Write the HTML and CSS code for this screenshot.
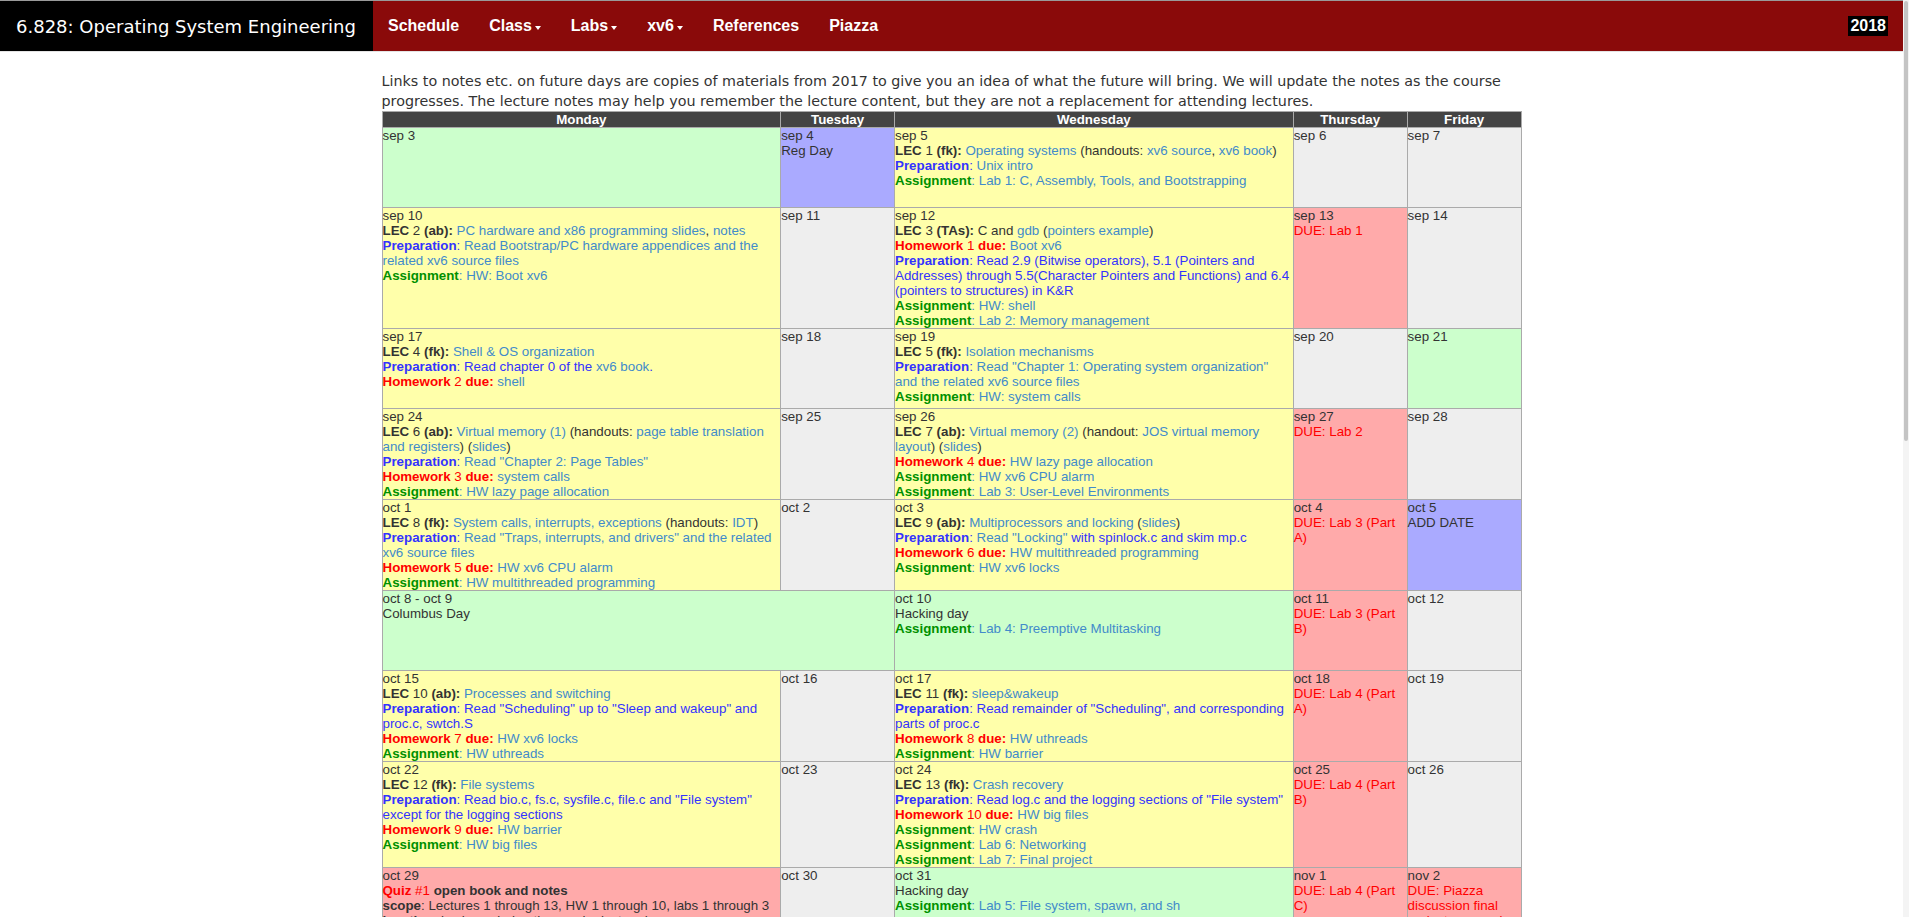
FILE: index.html
```html
<!DOCTYPE html>
<html lang="en">
<head>
<meta charset="utf-8">
<title>6.828 Schedule</title>
<link rel="stylesheet" href="styles.css">
</head>
<body>
<div class="scrollbar"><div class="thumb"></div></div>
<nav class="topbar">
  <a class="brand" href="#">6.828: Operating System Engineering</a>
  <ul class="nav">
    <li><a href="#">Schedule</a></li>
    <li><a href="#">Class<span class="caret"></span></a></li>
    <li><a href="#">Labs<span class="caret"></span></a></li>
    <li><a href="#">xv6<span class="caret"></span></a></li>
    <li><a href="#">References</a></li>
    <li><a href="#">Piazza</a></li>
  </ul>
  <span class="year">2018</span>
</nav>

<main class="container">
<p class="intro">Links to notes etc. on future days are copies of materials from 2017 to give you an idea of what the future will bring. We will update the notes as the course progresses. The lecture notes may help you remember the lecture content, but they are not a replacement for attending lectures.</p>

<table class="cal">
<colgroup><col class="wide"><col class="narrow"><col class="wide"><col class="narrow"><col class="narrow"></colgroup>
<thead>
<tr><th>Monday</th><th>Tuesday</th><th>Wednesday</th><th>Thursday</th><th>Friday</th></tr>
</thead>
<tbody>
<tr>
  <td class="c-green"><div>sep 3</div></td>
  <td class="c-blue"><div>sep 4</div><div>Reg Day</div></td>
  <td class="c-yellow"><div>sep 5</div>
    <div><b>LEC</b> 1 <b>(fk):</b> <a href="#">Operating systems</a> (handouts: <a href="#">xv6 source</a>, <a href="#">xv6 book</a>)</div>
    <div class="prep"><b>Preparation</b>: <a href="#">Unix intro</a></div>
    <div class="asg"><b>Assignment</b>: <a href="#">Lab 1: C, Assembly, Tools, and Bootstrapping</a></div>
  </td>
  <td class="c-gray"><div>sep 6</div></td>
  <td class="c-gray"><div>sep 7</div></td>
</tr>
<tr>
  <td class="c-yellow"><div>sep 10</div>
    <div><b>LEC</b> 2 <b>(ab):</b> <a href="#">PC hardware and x86 programming</a> <a href="#">slides</a>, <a href="#">notes</a></div>
    <div class="prep"><b>Preparation</b>: <a href="#">Read Bootstrap/PC hardware appendices and the related xv6 source files</a></div>
    <div class="asg"><b>Assignment</b>: <a href="#">HW: Boot xv6</a></div>
  </td>
  <td class="c-gray"><div>sep 11</div></td>
  <td class="c-yellow"><div>sep 12</div>
    <div><b>LEC</b> 3 <b>(TAs):</b> C and <a href="#">gdb</a> (<a href="#">pointers example</a>)</div>
    <div class="hw"><b>Homework</b> 1 <b>due:</b> <a href="#">Boot xv6</a></div>
    <div class="prep"><b>Preparation</b>: Read 2.9 (Bitwise operators), 5.1 (Pointers and Addresses) through 5.5(Character Pointers and Functions) and 6.4 (pointers to structures) in K&amp;R</div>
    <div class="asg"><b>Assignment</b>: <a href="#">HW: shell</a></div>
    <div class="asg"><b>Assignment</b>: <a href="#">Lab 2: Memory management</a></div>
  </td>
  <td class="c-red"><div>sep 13</div><div class="due">DUE: <a href="#">Lab 1</a></div></td>
  <td class="c-gray"><div>sep 14</div></td>
</tr>
<tr>
  <td class="c-yellow"><div>sep 17</div>
    <div><b>LEC</b> 4 <b>(fk):</b> <a href="#">Shell &amp; OS organization</a></div>
    <div class="prep"><b>Preparation</b>: Read chapter 0 of the <a href="#">xv6 book</a>.</div>
    <div class="hw"><b>Homework</b> 2 <b>due:</b> <a href="#">shell</a></div>
  </td>
  <td class="c-gray"><div>sep 18</div></td>
  <td class="c-yellow"><div>sep 19</div>
    <div><b>LEC</b> 5 <b>(fk):</b> <a href="#">Isolation mechanisms</a></div>
    <div class="prep"><b>Preparation</b>: <a href="#">Read "Chapter 1: Operating system organization" and the related xv6 source files</a></div>
    <div class="asg"><b>Assignment</b>: <a href="#">HW: system calls</a></div>
  </td>
  <td class="c-gray"><div>sep 20</div></td>
  <td class="c-green"><div>sep 21</div></td>
</tr>
<tr>
  <td class="c-yellow"><div>sep 24</div>
    <div><b>LEC</b> 6 <b>(ab):</b> <a href="#">Virtual memory (1)</a> (handouts: <a href="#">page table translation and registers</a>) (<a href="#">slides</a>)</div>
    <div class="prep"><b>Preparation</b>: <a href="#">Read "Chapter 2: Page Tables"</a></div>
    <div class="hw"><b>Homework</b> 3 <b>due:</b> <a href="#">system calls</a></div>
    <div class="asg"><b>Assignment</b>: <a href="#">HW lazy page allocation</a></div>
  </td>
  <td class="c-gray"><div>sep 25</div></td>
  <td class="c-yellow"><div>sep 26</div>
    <div><b>LEC</b> 7 <b>(ab):</b> <a href="#">Virtual memory (2)</a> (handout: <a href="#">JOS virtual memory layout</a>) (<a href="#">slides</a>)</div>
    <div class="hw"><b>Homework</b> 4 <b>due:</b> <a href="#">HW lazy page allocation</a></div>
    <div class="asg"><b>Assignment</b>: <a href="#">HW xv6 CPU alarm</a></div>
    <div class="asg"><b>Assignment</b>: <a href="#">Lab 3: User-Level Environments</a></div>
  </td>
  <td class="c-red"><div>sep 27</div><div class="due">DUE: <a href="#">Lab 2</a></div></td>
  <td class="c-gray"><div>sep 28</div></td>
</tr>
<tr>
  <td class="c-yellow"><div>oct 1</div>
    <div><b>LEC</b> 8 <b>(fk):</b> <a href="#">System calls, interrupts, exceptions</a> (handouts: <a href="#">IDT</a>)</div>
    <div class="prep"><b>Preparation</b>: <a href="#">Read "Traps, interrupts, and drivers" and the related xv6 source files</a></div>
    <div class="hw"><b>Homework</b> 5 <b>due:</b> <a href="#">HW xv6 CPU alarm</a></div>
    <div class="asg"><b>Assignment</b>: <a href="#">HW multithreaded programming</a></div>
  </td>
  <td class="c-gray"><div>oct 2</div></td>
  <td class="c-yellow"><div>oct 3</div>
    <div><b>LEC</b> 9 <b>(ab):</b> <a href="#">Multiprocessors and locking</a> (<a href="#">slides</a>)</div>
    <div class="prep"><b>Preparation</b>: <a href="#">Read "Locking"</a> with spinlock.c and skim mp.c</div>
    <div class="hw"><b>Homework</b> 6 <b>due:</b> <a href="#">HW multithreaded programming</a></div>
    <div class="asg"><b>Assignment</b>: <a href="#">HW xv6 locks</a></div>
  </td>
  <td class="c-red"><div>oct 4</div><div class="due">DUE: <a href="#">Lab 3 (Part A)</a></div></td>
  <td class="c-blue"><div>oct 5</div><div>ADD DATE</div></td>
</tr>
<tr>
  <td class="c-green" colspan="2"><div>oct 8 - oct 9</div><div>Columbus Day</div></td>
  <td class="c-green"><div>oct 10</div>
    <div>Hacking day</div>
    <div class="asg"><b>Assignment</b>: <a href="#">Lab 4: Preemptive Multitasking</a></div>
  </td>
  <td class="c-red"><div>oct 11</div><div class="due">DUE: <a href="#">Lab 3 (Part B)</a></div></td>
  <td class="c-gray"><div>oct 12</div></td>
</tr>
<tr>
  <td class="c-yellow"><div>oct 15</div>
    <div><b>LEC</b> 10 <b>(ab):</b> <a href="#">Processes and switching</a></div>
    <div class="prep"><b>Preparation</b>: Read "Scheduling" up to "Sleep and wakeup" and proc.c, swtch.S</div>
    <div class="hw"><b>Homework</b> 7 <b>due:</b> <a href="#">HW xv6 locks</a></div>
    <div class="asg"><b>Assignment</b>: <a href="#">HW uthreads</a></div>
  </td>
  <td class="c-gray"><div>oct 16</div></td>
  <td class="c-yellow"><div>oct 17</div>
    <div><b>LEC</b> 11 <b>(fk):</b> <a href="#">sleep&amp;wakeup</a></div>
    <div class="prep"><b>Preparation</b>: Read remainder of "Scheduling", and corresponding parts of proc.c</div>
    <div class="hw"><b>Homework</b> 8 <b>due:</b> <a href="#">HW uthreads</a></div>
    <div class="asg"><b>Assignment</b>: <a href="#">HW barrier</a></div>
  </td>
  <td class="c-red"><div>oct 18</div><div class="due">DUE: <a href="#">Lab 4 (Part A)</a></div></td>
  <td class="c-gray"><div>oct 19</div></td>
</tr>
<tr>
  <td class="c-yellow"><div>oct 22</div>
    <div><b>LEC</b> 12 <b>(fk):</b> <a href="#">File systems</a></div>
    <div class="prep"><b>Preparation</b>: Read bio.c, fs.c, sysfile.c, file.c and "File system" except for the logging sections</div>
    <div class="hw"><b>Homework</b> 9 <b>due:</b> <a href="#">HW barrier</a></div>
    <div class="asg"><b>Assignment</b>: <a href="#">HW big files</a></div>
  </td>
  <td class="c-gray"><div>oct 23</div></td>
  <td class="c-yellow"><div>oct 24</div>
    <div><b>LEC</b> 13 <b>(fk):</b> <a href="#">Crash recovery</a></div>
    <div class="prep"><b>Preparation</b>: Read log.c and the logging sections of "File system"</div>
    <div class="hw"><b>Homework</b> 10 <b>due:</b> <a href="#">HW big files</a></div>
    <div class="asg"><b>Assignment</b>: <a href="#">HW crash</a></div>
    <div class="asg"><b>Assignment</b>: <a href="#">Lab 6: Networking</a></div>
    <div class="asg"><b>Assignment</b>: <a href="#">Lab 7: Final project</a></div>
  </td>
  <td class="c-red"><div>oct 25</div><div class="due">DUE: <a href="#">Lab 4 (Part B)</a></div></td>
  <td class="c-gray"><div>oct 26</div></td>
</tr>
<tr>
  <td class="c-red"><div>oct 29</div>
    <div><span class="quiz"><b>Quiz</b> #1</span> <b>open book and notes</b></div>
    <div><b>scope</b>: Lectures 1 through 13, HW 1 through 10, labs 1 through 3</div>
    <div><b>location</b>: in class, during the regular lecture hour</div>
  </td>
  <td class="c-gray"><div>oct 30</div></td>
  <td class="c-green"><div>oct 31</div>
    <div>Hacking day</div>
    <div class="asg"><b>Assignment</b>: <a href="#">Lab 5: File system, spawn, and sh</a></div>
  </td>
  <td class="c-red"><div>nov 1</div><div class="due">DUE: <a href="#">Lab 4 (Part C)</a></div></td>
  <td class="c-red"><div>nov 2</div><div class="due">DUE: Piazza discussion final project proposals</div></td>
</tr>
</tbody>
</table>
</main>
</body>
</html>
```

FILE: styles.css
```css
html {
  overflow-x: hidden;
}

body {
  margin: 0;
  padding-right: 6px;
  font-family: "Liberation Sans", Arial, sans-serif;
  font-size: 13.33px;
  color: #333;
  background: #fff;
}

a {
  color: #428bca;
  text-decoration: none;
}

/* page scrollbar strip at the right edge of the window */
.scrollbar {
  position: fixed;
  top: 0;
  right: 0;
  width: 6px;
  height: 100%;
  background: #f4f4f4;
}

.scrollbar .thumb {
  width: 4px;
  height: 440px;
  margin: 1px auto 0;
  background: #c4c4c4;
  border-radius: 2px;
}

/* top navigation bar */
.topbar {
  display: flex;
  align-items: stretch;
  height: 50px;
  background: #8a0a0a;
  border-top: 1px solid #9a9a9a;
  border-bottom: 1px solid #e4e4e4;
}

.brand {
  display: flex;
  align-items: center;
  box-sizing: border-box;
  width: 373px;
  padding-left: 16px;
  background: #000;
  color: #fff;
  font-family: "DejaVu Sans", Verdana, sans-serif;
  font-size: 18px;
}

.nav {
  display: flex;
  margin: 0;
  padding: 0;
  list-style: none;
}

.nav a {
  display: flex;
  align-items: center;
  height: 50px;
  padding: 0 15px;
  color: #fff;
  font-size: 16px;
  font-weight: bold;
}

.caret {
  display: inline-block;
  width: 0;
  height: 0;
  margin-left: 3px;
  margin-top: 3px;
  border-top: 4px solid #fff;
  border-left: 3px solid transparent;
  border-right: 3px solid transparent;
}

.year {
  align-self: center;
  margin-left: auto;
  margin-right: 15px;
  padding: 0 2px;
  background: #000;
  color: #fff;
  font-size: 16px;
  font-weight: bold;
  line-height: 20px;
}

/* page body */
.container {
  width: 1140px;
  margin: 0 auto;
}

.intro {
  margin: 19px 0 0;
  font-family: "DejaVu Sans", Verdana, sans-serif;
  font-size: 14.3px;
  line-height: 20px;
}

.cal {
  width: 100%;
  border-collapse: collapse;
  table-layout: fixed;
}

.cal col.wide { width: 35%; }
.cal col.narrow { width: 10%; }

.cal th,
.cal td {
  border: 1px solid #aaa;
  padding: 0;
  line-height: 15px;
  vertical-align: top;
}

.cal th {
  background: #444;
  color: #fff;
  font-weight: bold;
  text-align: center;
}

.cal td {
  height: 79px;
}

.c-green { background: #ccffcc; }
.c-blue { background: #aaaaff; }
.c-yellow { background: #ffffaa; }
.c-gray { background: #eeeeee; }
.c-red { background: #ffaaaa; }

.prep { color: #3333ff; }
.asg { color: #428bca; }
.asg b { color: #009000; }
.hw { color: #ff0000; }
.due,
.due a { color: #ff0000; }
.quiz { color: #ff0000; }
```
